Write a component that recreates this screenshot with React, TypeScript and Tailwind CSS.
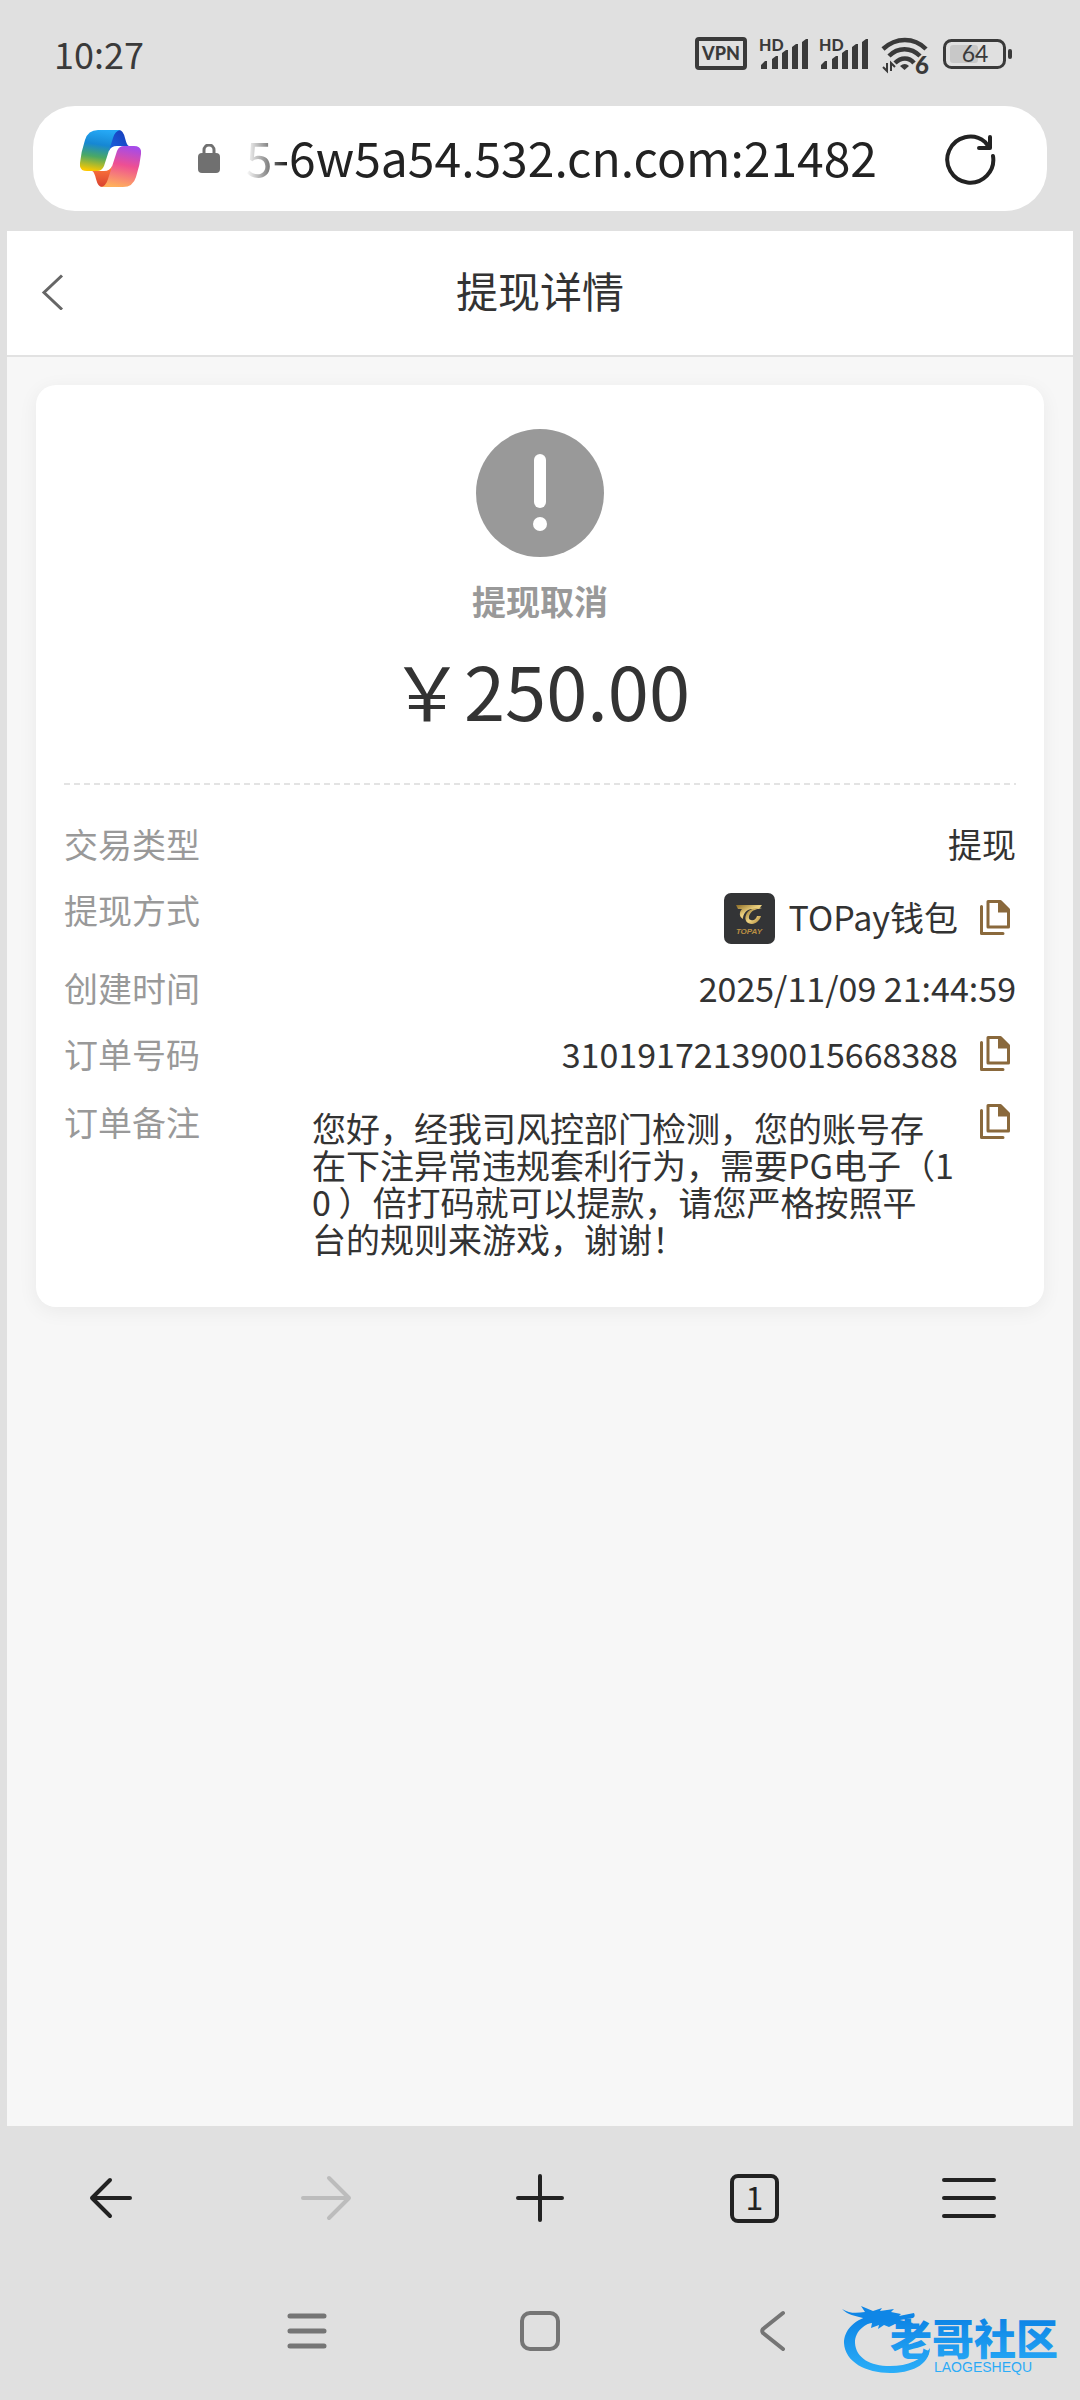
import type { ReactNode } from 'react';

export default function App() {
  return (
    <div className="flex min-h-screen flex-col bg-[#e0e0e0] font-['Noto_Sans_CJK_SC',sans-serif] text-[#333333]">
      <StatusBar />
      <AddressBar />

      <main className="mx-[7px] flex flex-1 flex-col bg-[#f7f7f7]">
        <header className="grid grid-cols-[80px_1fr_80px] items-center border-b-2 border-[#e2e2e2] bg-white pt-7 pb-[34px]">
          <button type="button" aria-label="返回" className="pt-1 pl-[34px]">
            <svg width="24" height="36" viewBox="0 0 24 36" fill="none" stroke="#666666" strokeWidth="3">
              <path d="M21 1.5 3 18.5 21 35.5" />
            </svg>
          </button>
          <h1 className="text-center text-[42px] leading-[62px]">提现详情</h1>
        </header>

        <section className="mx-[29px] mt-7 rounded-[20px] bg-white px-7 pt-11 pb-[50px] shadow-[0_4px_20px_rgba(0,0,0,0.06)]">
          <div className="flex flex-col items-center">
            <svg width="128" height="128" viewBox="0 0 128 128">
              <circle cx="64" cy="64" r="64" fill="#999999" />
              <rect x="58" y="25" width="12" height="54" rx="6" fill="#fff" />
              <circle cx="64" cy="95" r="7" fill="#fff" />
            </svg>
            <p className="mt-5 text-[34px] leading-[48px] font-bold text-[#999999]">提现取消</p>
            <p className="mt-5 text-[74px] leading-[88px]">￥250.00</p>
          </div>

          <svg className="mt-[50px] block w-full" height="2">
            <line x1="0" y1="1" x2="100%" y2="1" stroke="#e3e3e3" strokeWidth="2" strokeDasharray="6 4" />
          </svg>

          <dl className="mt-[34px] flex flex-col text-[34px]">
            <Row label="交易类型">提现</Row>
            <div className="flex h-[78px] items-start justify-between pt-2">
              <dt className="leading-[34px] text-[#999999]">提现方式</dt>
              <dd className="flex items-start">
                <TopayLogo />
                <span className="ml-[14px] leading-[48px]">TOPay钱包</span>
                <CopyButton label="复制提现方式" />
              </dd>
            </div>
            <Row label="创建时间">2025/11/09 21:44:59</Row>
            <Row label="订单号码">
              310191721390015668388
              <CopyButton label="复制订单号码" />
            </Row>
            <div className="flex items-start justify-between pt-0.5">
              <dt className="leading-[50px] text-[#999999]">订单备注</dt>
              <dd className="flex items-start">
                <p className="mt-3 w-[646px] leading-[37px]">
                  您好，经我司风控部门检测，您的账号存
                  <br />
                  在下注异常违规套利行为，需要PG电子（1
                  <br />
                  0 ）倍打码就可以提款，请您严格按照平
                  <br />
                  台的规则来游戏，谢谢！
                </p>
                <CopyButton label="复制订单备注" />
              </dd>
            </div>
          </dl>
        </section>
      </main>

      <BrowserNav />
      <SystemNav />
    </div>
  );
}

function Row({ label, children }: { label: string; children: ReactNode }) {
  return (
    <div className="flex h-[66px] items-start justify-between leading-[50px]">
      <dt className="text-[#999999]">{label}</dt>
      <dd className="flex items-start">{children}</dd>
    </div>
  );
}

function CopyButton({ label }: { label: string }) {
  return (
    <button type="button" aria-label={label} className="flex h-12 w-[58px] items-center justify-center pl-4">
      <svg width="30" height="35" viewBox="0 0 30 35" fill="none" stroke="#8a693c" strokeWidth="3">
        <path d="M8 1.5h12.5l8 8V27H8z" strokeLinejoin="round" />
        <path d="M18 1.5h3l8 8v3H18z" fill="#8a693c" stroke="none" />
        <path d="M1.5 6.5v27H23" strokeLinecap="round" strokeLinejoin="round" />
      </svg>
    </button>
  );
}

function TopayLogo() {
  return (
    <svg width="51" height="51" viewBox="0 0 51 51">
      <defs>
        <linearGradient id="gold" x1="0" x2="1" y1="0" y2="1">
          <stop offset="0" stopColor="#8a6a24" />
          <stop offset="0.5" stopColor="#f0d583" />
          <stop offset="1" stopColor="#a57c2c" />
        </linearGradient>
      </defs>
      <rect width="51" height="51" rx="7" fill="#333436" />
      <path d="M12 12h26l-3 4H27c-5 1-8 5-8 10-4-2-4-7-1-10h-4z" fill="url(#gold)" />
      <path
        d="M38 15c-6-1-14 1-16 7-2 5 1 9 6 9 4 0 8-4 9-8h-4c-1 3-3 5-6 4-2 0-3-3-1-6 2-4 7-5 12-6z"
        fill="url(#gold)"
      />
      <text
        x="25"
        y="41"
        textAnchor="middle"
        fontSize="8"
        fontWeight="700"
        fontStyle="italic"
        fontFamily="Liberation Sans, sans-serif"
        fill="#b98f43"
      >
        TOPAY
      </text>
    </svg>
  );
}

function StatusBar() {
  return (
    <div className="flex h-[106px] items-center justify-between pr-[66px] pl-[54px] text-[#3a3a3a]">
      <span className="text-[36px] leading-[50px]">10:27</span>
      <div className="flex items-center pt-0.5">
        <svg width="320" height="44" viewBox="0 0 320 44" fill="none" className="font-['Lato',sans-serif]">
          <rect x="3" y="7" width="48" height="29" rx="2" stroke="#3a3a3a" strokeWidth="4" />
          <text x="27" y="28" textAnchor="middle" fontSize="18" fontWeight="900" fill="#3a3a3a">
            VPN
          </text>
          <Signal x={65} />
          <Signal x={125} />
          <g stroke="#3a3a3a" strokeWidth="4.5">
            <path d="M189 17c13-12 31-12 43 0" />
            <path d="M195 24c9-9 22-9 31 0" />
            <path d="M201 31c6-6 14-6 19 0" />
          </g>
          <path d="M206 34q5-4 9 0l-4.500 4z" fill="#3a3a3a" />
          <path d="M193 31v8l-4-4M197 39v-8l4 4" stroke="#3a3a3a" strokeWidth="2" />
          <text x="221" y="42" fontSize="24" fontWeight="900" fill="#3a3a3a">
            6
          </text>
          <rect x="250.500" y="8.500" width="60" height="27" rx="7" stroke="#3a3a3a" strokeWidth="3" />
          <rect x="256" y="13" width="28" height="18" rx="3" fill="#c8c8c8" />
          <text x="281" y="30" textAnchor="middle" fontSize="23" fill="#3a3a3a">
            64
          </text>
          <rect x="314" y="17" width="4" height="10" rx="2" fill="#3a3a3a" />
        </svg>
      </div>
    </div>
  );
}

function Signal({ x }: { x: number }) {
  return (
    <g transform={`translate(${x} 0)`} fill="#3a3a3a">
      <text x="0" y="19" fontSize="16" fontWeight="900">
        HD
      </text>
      <path d="M2 37v-4l4-4h2v8zM13 37V27l4-3h2v13zM23 37V21l4-3h2v19zM33 37V15l4-3h2v25zM43 37V10l4-3h2v30z" />
    </g>
  );
}

function AddressBar() {
  return (
    <div className="mx-[33px] mb-5 flex h-[105px] items-center rounded-[42px] bg-white">
      <button type="button" aria-label="Copilot" className="ml-[47px]">
        <CopilotLogo />
      </button>
      <svg className="ml-[57px]" width="22" height="29" viewBox="0 0 22 29">
        <path d="M6 12V6a5 5 0 0 1 10 0v6" fill="none" stroke="#707070" strokeWidth="3" />
        <rect y="9" width="22" height="20" rx="4" fill="#707070" />
      </svg>
      <input
        type="text"
        readOnly
        aria-label="网址"
        value="5-6w5a54.532.cn.com:21482"
        className="ml-4 min-w-0 flex-1 bg-transparent pb-1.5 text-right text-[48px] leading-[70px] text-[#222222] outline-none [mask-image:linear-gradient(to_right,transparent_10px,black_50px)]"
      />
      <button type="button" aria-label="刷新" className="mr-[50px] ml-[66px]">
        <svg width="54" height="54" viewBox="0 0 54 54" fill="none" stroke="#222222" strokeWidth="4">
          <path d="M50 24A23 23 0 1 1 42 10l4 5" strokeLinecap="round" />
          <path d="M47 5v11H36" strokeLinecap="round" strokeLinejoin="round" />
        </svg>
      </button>
    </div>
  );
}

function CopilotLogo() {
  return (
    <svg width="61" height="57" viewBox="0 0 61 57">
      <defs>
        <linearGradient id="cool" x1="0.500" x2="0.350" y1="0" y2="1">
          <stop offset="0" stopColor="#25a8f5" />
          <stop offset="0.350" stopColor="#1687d3" />
          <stop offset="0.650" stopColor="#4aa865" />
          <stop offset="1" stopColor="#fcc800" />
        </linearGradient>
        <linearGradient id="warm" x1="0.600" x2="0.400" y1="0" y2="1">
          <stop offset="0" stopColor="#a64be8" />
          <stop offset="0.450" stopColor="#ee4f93" />
          <stop offset="1" stopColor="#ffb05c" />
        </linearGradient>
        <linearGradient id="navy" x1="1" x2="0" y1="0" y2="1">
          <stop offset="0" stopColor="#1639b8" />
          <stop offset="1" stopColor="#1b63e0" />
        </linearGradient>
        <linearGradient id="ember" x1="0" x2="0" y1="0" y2="1">
          <stop offset="0" stopColor="#ff7a3c" />
          <stop offset="1" stopColor="#d9412f" />
        </linearGradient>
      </defs>
      <path d="M30 0h9q4 0 6 8t4 8H37q-6 0-8 5z" fill="url(#navy)" />
      <path d="M31 57h-9q-4 0-6-8t-4-8h12q6 0 8-5z" fill="url(#ember)" />
      <path d="M5 10Q8 0 18 0h22q-5 1-7 8l-9 28q-2 5-7 5H7q-8 0-7-8Q1 22 5 10z" fill="url(#cool)" />
      <path d="M56 47Q53 57 43 57H21q5-1 7-8l9-28q2-5 7-5h10q8 0 7 8Q60 35 56 47z" fill="url(#warm)" />
    </svg>
  );
}

function BrowserNav() {
  return (
    <nav className="grid h-[144px] grid-cols-5 items-center justify-items-center px-1 text-[#222222]">
      <button type="button" aria-label="后退">
        <NavIcon d="M10 29h38M28 11 10 29l18 18" />
      </button>
      <button type="button" aria-label="前进" disabled className="text-[#bcbcbc]">
        <NavIcon d="M6 29h46M32 9l20 20-20 20" />
      </button>
      <button type="button" aria-label="新建标签页">
        <NavIcon d="M7 29h44M29 7v44" />
      </button>
      <button
        type="button"
        className="flex size-[49px] items-center justify-center rounded-lg border-4 border-[#222222] pb-1 text-[32px] leading-[36px]"
      >
        1
      </button>
      <button type="button" aria-label="菜单">
        <NavIcon d="M4 11h50M4 29h50M4 47h50" />
      </button>
    </nav>
  );
}

function NavIcon({ d }: { d: string }) {
  return (
    <svg width="58" height="58" viewBox="0 0 58 58" fill="none" stroke="currentColor" strokeWidth="4" strokeLinecap="round">
      <path d={d} strokeLinejoin="round" />
    </svg>
  );
}

function SystemNav() {
  return (
    <footer className="relative h-[130px] px-[190px] pt-10">
      <div className="grid grid-cols-3 justify-items-center text-[#757575]">
        <button type="button" aria-label="最近任务">
          <svg width="42" height="42" viewBox="0 0 42 42" stroke="currentColor" strokeWidth="5" strokeLinecap="round">
            <path d="M4 6h34M4 21h34M4 36h34" />
          </svg>
        </button>
        <button type="button" aria-label="主屏幕">
          <svg width="42" height="42" viewBox="0 0 42 42" fill="none" stroke="currentColor" strokeWidth="4">
            <rect x="3" y="3" width="36" height="36" rx="8" />
          </svg>
        </button>
        <button type="button" aria-label="返回上一页">
          <svg width="42" height="42" viewBox="0 0 42 42" fill="none" stroke="currentColor" strokeWidth="4" strokeLinecap="round">
            <path d="M31 3 11 19q-1.500 2 0 4l20 16" strokeLinejoin="round" />
          </svg>
        </button>
      </div>
      <div className="absolute right-3 bottom-5">
        <CommunityMark />
      </div>
    </footer>
  );
}

function CommunityMark() {
  return (
    <svg width="226" height="74" viewBox="0 0 226 74">
      <defs>
        <linearGradient id="sky" x1="0" x2="0" y1="0" y2="74" gradientUnits="userSpaceOnUse">
          <stop offset="0.200" stopColor="#0f86e6" />
          <stop offset="1" stopColor="#2fb4fb" />
        </linearGradient>
      </defs>
      <g fill="url(#sky)">
        <path d="M36 8C10 12 2 26 2 37c1 19 22 30 46 30 20 0 39-7 40-25-8 12-22 18-40 18-20 0-34-8-35-23 0-13 11-21 27-23z" />
        <path d="M0 3c8 5 15 4 23 3l-4-6 12 5 9-3-2 3 14-2-3 3 10 2-2 2 15-3c1 2 1 4-1 5l-13 2 13 3-2 3-16-2-6 3-5-2-6 4 1-4-8 3 1-5-6 1 3-5-6-1C13 10 6 9 0 3z" />
        <text x="48" y="49" fontSize="42" fontWeight="900" fontFamily="Noto Sans CJK SC, sans-serif">
          老哥社区
        </text>
        <text x="92" y="66" fontSize="14" fontFamily="Liberation Sans, sans-serif">
          LAOGESHEQU
        </text>
      </g>
    </svg>
  );
}
